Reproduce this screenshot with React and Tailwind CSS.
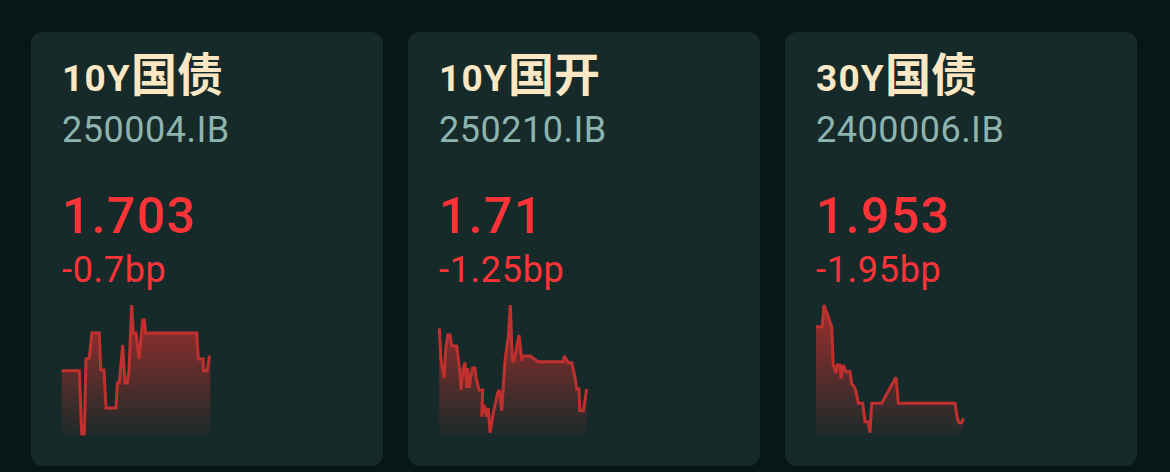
import React from "react";

const cards = [
  {
    code: "10Y",
    cn: "国债",
    id: "250004.IB",
    price: "1.703",
    chg: "-0.7bp",
    x0: 62,
    pts: [
      [61.7, 370.7], [79.3, 370.7], [81.7, 434], [84.3, 434], [86, 359], [89.3, 358],
      [92, 333], [99.3, 333], [100.7, 370], [104, 370], [106, 408], [116, 408],
      [117.3, 383], [119.3, 383], [122.7, 345], [125, 383], [127.3, 383], [129, 370],
      [131.7, 305], [133.3, 333], [136, 333], [139, 359], [142.7, 320], [144.3, 320],
      [145.7, 333], [196.7, 333], [198.3, 359], [203.3, 359], [203.3, 370.7],
      [207, 370.7], [209.3, 357], [210.3, 357],
    ],
  },
  {
    code: "10Y",
    cn: "国开",
    id: "250210.IB",
    price: "1.71",
    chg: "-1.25bp",
    x0: 439,
    pts: [
      [439.3, 328.3], [441, 360], [444.3, 378], [445.7, 350], [447.7, 335], [450, 335],
      [451.7, 346], [456.7, 346], [460, 373.3], [461, 390], [463.3, 368], [465, 362.7],
      [466.7, 388], [467.7, 368], [469.3, 388], [470.7, 377], [472.7, 368], [475, 368],
      [476, 377], [479, 390], [482.7, 390], [481.7, 416.7], [484.3, 405], [486.7, 416.7],
      [488.3, 408], [490, 432.7], [493.3, 413], [497.7, 393], [499.3, 390], [501.7, 410.7],
      [505, 360.7], [508.3, 336.7], [510.3, 305], [512.3, 360], [514, 361.7], [516.7, 346.7],
      [519, 335], [520.3, 346.7], [521.7, 360.7], [522.3, 356], [530, 356], [538.3, 361.7],
      [563.3, 361.7], [564.3, 356], [566.7, 360], [568.3, 362.7], [571.7, 362.7],
      [575, 377.3], [576.7, 389], [579, 389], [579.7, 410.7], [583.3, 410.7], [585, 400],
      [586.7, 389],
    ],
  },
  {
    code: "30Y",
    cn: "国债",
    id: "2400006.IB",
    price: "1.953",
    chg: "-1.95bp",
    x0: 816,
    pts: [
      [816, 326.7], [822.3, 326.7], [824, 305], [831.7, 326.7], [833.3, 365], [836, 373.3],
      [837.3, 365], [840, 365], [841, 378.3], [843.3, 365], [846, 371.7], [850, 371.7],
      [851.7, 384], [854.3, 386.7], [856, 391.7], [858.3, 403.3], [862.7, 403.3],
      [865, 421.7], [868.3, 421.7], [870, 432.7], [871.7, 403.3], [881.7, 403.3],
      [896, 377.3], [898.3, 403.3], [955, 403.3], [957.3, 418.3], [959, 422.7],
      [961.7, 422.7], [963.3, 418.3],
    ],
  },
];

function Spark({ pts, x0, idx }) {
  const top = 304;
  const bottom = 131;
  const p = pts.map(([x, y]) => [x - x0, y - top]);
  const line = p.map(([x, y], i) => `${i ? "L" : "M"}${x.toFixed(1)} ${y.toFixed(1)}`).join(" ");
  const area = `${line} L${p[p.length - 1][0].toFixed(1)} ${bottom} L${p[0][0].toFixed(1)} ${bottom} Z`;
  const gid = `g${idx}`;
  return (
    <svg width="154" height="132" viewBox="0 0 154 132" className="block overflow-visible">
      <defs>
        <linearGradient id={gid} x1="0" y1="0" x2="0" y2="131" gradientUnits="userSpaceOnUse">
          <stop offset="0" stopColor="#c8302e" stopOpacity="0.78" />
          <stop offset="1" stopColor="#c8302e" stopOpacity="0.05" />
        </linearGradient>
      </defs>
      <path d={area} fill={`url(#${gid})`} />
      <path d={line} fill="none" stroke="#c0302e" strokeWidth="3" strokeLinejoin="miter" strokeMiterlimit="2" />
    </svg>
  );
}

export default function App() {
  return (
    <div
      className="w-[1170px] h-[472px] bg-[#091616] flex gap-[25px] pl-[31px] pt-[32px] overflow-hidden"
      style={{ fontFamily: "Roboto, 'Noto Sans CJK SC', sans-serif" }}
    >
      {cards.map((c, i) => (
        <div key={i} className="w-[352px] h-[434px] rounded-[12px] bg-[#162a2a] pl-[31px] pt-[28px] flex flex-col">
          <div className="h-[36px] flex items-baseline text-[#fbe7c4] leading-none">
            <span className="text-[37px] font-bold tracking-[1.2px] font-['Roboto']">{c.code}</span>
            <span className="text-[46px] font-bold leading-none font-['Noto_Sans_CJK_SC'] -mt-[12px]">{c.cn}</span>
          </div>
          <div className="mt-[16px] h-[36px] text-[36px] leading-none tracking-[0.5px] text-[#8db4af] font-['Roboto']">{c.id}</div>
          <div className="mt-[43px] h-[50px] text-[50px] leading-none tracking-[1.4px] font-medium text-[#ff3338] font-['Roboto']">{c.price}</div>
          <div className="mt-[11px] h-[36px] text-[36px] leading-none tracking-[0.7px] text-[#ff3338] font-['Roboto']">{c.chg}</div>
          <div className="mt-[16px]">
            <Spark pts={c.pts} x0={c.x0} idx={i} />
          </div>
        </div>
      ))}
    </div>
  );
}
